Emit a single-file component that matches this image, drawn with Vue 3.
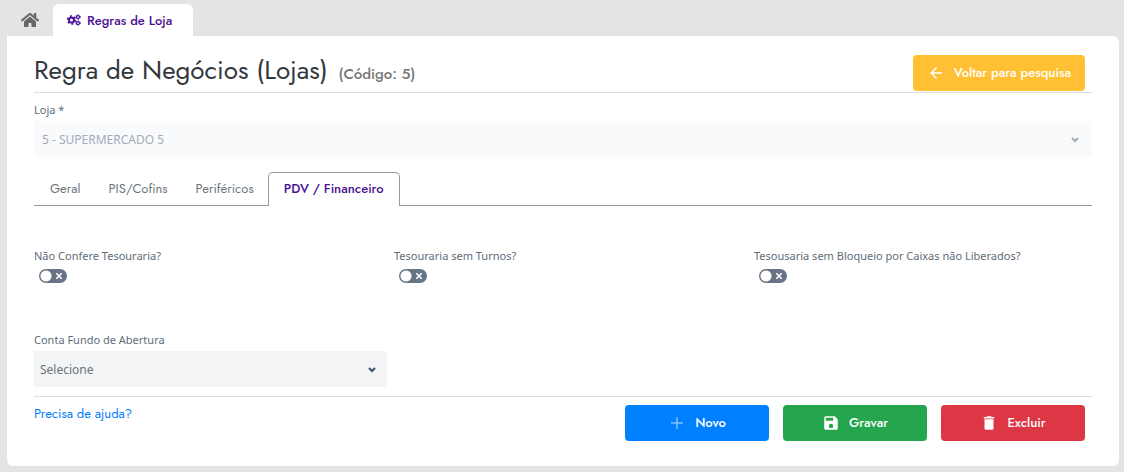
<script setup>
import {ref} from 'vue';

const tabs = ['Geral', 'PIS/Cofins', 'Periféricos', 'PDV / Financeiro'];
const activeTab = ref('PDV / Financeiro');

const loja = ref('5');
const conta = ref('');

const switches = ref([
    {id: 'nao-confere', label: 'Não Confere Tesouraria?', value: false},
    {id: 'sem-turnos', label: 'Tesouraria sem Turnos?', value: false},
    {id: 'sem-bloqueio', label: 'Tesousaria sem Bloqueio por Caixas não Liberados?', value: false},
]);
</script>

<template>
    <div class="page">
        <nav class="page-tabs">
            <a href="#" class="home-link" aria-label="Home">
                <svg width="18" height="16" viewBox="0 0 576 512" fill="currentColor">
                    <path d="M280.37 148.26L96 300.11V464a16 16 0 0 0 16 16l112.06-.29a16 16 0 0 0 15.92-16V368a16 16 0 0 1 16-16h64a16 16 0 0 1 16 16v95.64a16 16 0 0 0 16 16.05L464 480a16 16 0 0 0 16-16V300L295.67 148.26a12.19 12.19 0 0 0-15.3 0zM571.6 251.47L488 182.56V44.05a12 12 0 0 0-12-12h-56a12 12 0 0 0-12 12v72.61L318.47 43a48 48 0 0 0-61 0L4.34 251.47a12 12 0 0 0-1.6 16.9l25.5 31A12 12 0 0 0 45.15 301l235.22-193.74a12.19 12.19 0 0 1 15.3 0L530.9 301a12 12 0 0 0 16.9-1.6l25.5-31a12 12 0 0 0-1.7-16.93z"/>
                </svg>
            </a>
            <a href="#" class="page-tab">
                <svg width="14" height="12" viewBox="0 0 28 24" fill="none" stroke="currentColor">
                    <circle cx="9" cy="12" r="5" stroke-width="4"/>
                    <circle cx="9" cy="12" r="8" stroke-width="3" stroke-dasharray="4.2 4.178"/>
                    <circle cx="22" cy="6" r="3" stroke-width="2.5"/>
                    <circle cx="22" cy="6" r="4.6" stroke-width="2" stroke-dasharray="2.4 2.417"/>
                    <circle cx="22" cy="18" r="3" stroke-width="2.5"/>
                    <circle cx="22" cy="18" r="4.6" stroke-width="2" stroke-dasharray="2.4 2.417"/>
                </svg>
                Regras de Loja
            </a>
        </nav>

        <main class="panel">
            <header class="panel-header">
                <h1>Regra de Negócios (Lojas) <small>(Código: 5)</small></h1>
                <button type="button" class="btn btn-warning">
                    <svg width="18" height="18" viewBox="0 0 24 24" fill="currentColor">
                        <path d="M20 11v2H8l5.5 5.5-1.42 1.42L4.16 12l7.92-7.92L13.5 5.5 8 11h12z"/>
                    </svg>
                    Voltar para pesquisa
                </button>
            </header>

            <div class="field">
                <label for="loja">Loja *</label>
                <div class="select-box disabled">
                    <select id="loja" v-model="loja" disabled>
                        <option value="5">5 - SUPERMERCADO 5</option>
                    </select>
                    <svg class="chevron" width="8" height="6" viewBox="0 0 8 6" fill="none" stroke="currentColor" stroke-width="2">
                        <path d="M1 1l3 3 3-3"/>
                    </svg>
                </div>
            </div>

            <div class="tabs" role="tablist">
                <button
                    v-for="tab in tabs"
                    :key="tab"
                    type="button"
                    role="tab"
                    class="tab"
                    :class="{active: tab === activeTab}"
                    :aria-selected="tab === activeTab"
                    @click="activeTab = tab"
                >{{ tab }}</button>
            </div>

            <div class="form-grid">
                <div v-for="item in switches" :key="item.id" class="field">
                    <label :for="item.id">{{ item.label }}</label>
                    <div class="switch">
                        <input :id="item.id" v-model="item.value" type="checkbox">
                        <svg v-if="!item.value" class="switch-off" width="6" height="6" viewBox="0 0 6 6" stroke="currentColor" stroke-width="1.5">
                            <path d="M0 0l6 6M6 0l-6 6"/>
                        </svg>
                    </div>
                </div>
                <div class="field">
                    <label for="conta">Conta Fundo de Abertura</label>
                    <div class="select-box">
                        <select id="conta" v-model="conta">
                            <option value="">Selecione</option>
                        </select>
                        <svg class="chevron" width="8" height="6" viewBox="0 0 8 6" fill="none" stroke="currentColor" stroke-width="2">
                            <path d="M1 1l3 3 3-3"/>
                        </svg>
                    </div>
                </div>
            </div>

            <footer class="panel-footer">
                <a href="#" class="help">Precisa de ajuda?</a>
                <div class="actions">
                    <button type="button" class="btn btn-primary">
                        <svg class="faded" width="18" height="18" viewBox="0 0 24 24" fill="currentColor">
                            <path d="M20 13h-7v7h-2v-7H4v-2h7V4h2v7h7v2z"/>
                        </svg>
                        Novo
                    </button>
                    <button type="button" class="btn btn-success">
                        <svg width="18" height="18" viewBox="0 0 24 24" fill="currentColor">
                            <path d="M15 9H5V5h10m-3 14a3 3 0 0 1-3-3 3 3 0 0 1 3-3 3 3 0 0 1 3 3 3 3 0 0 1-3 3m5-16H5a2 2 0 0 0-2 2v14a2 2 0 0 0 2 2h14a2 2 0 0 0 2-2V7l-4-4z"/>
                        </svg>
                        Gravar
                    </button>
                    <button type="button" class="btn btn-danger">
                        <svg width="18" height="18" viewBox="0 0 24 24" fill="currentColor">
                            <path d="M19 4h-3.500l-1-1h-5l-1 1H5v2h14M6 19a2 2 0 0 0 2 2h8a2 2 0 0 0 2-2V7H6v12z"/>
                        </svg>
                        Excluir
                    </button>
                </div>
            </footer>
        </main>
    </div>
</template>

<style>
body {
    margin: 0;
    background-color: #e4e4e4;
}
</style>

<style scoped>
.page {
    box-sizing: border-box;
    min-height: 100vh;
    padding: 4px 5px 6px 7px;
    font-family: Jost, Lato, sans-serif;
    font-size: 13px;
    color: #6c757d;
}
.page-tabs {
    display: flex;
    height: 32px;
}
.home-link {
    display: flex;
    align-items: center;
    padding: 0 14px;
    color: #666;
}
.page-tab {
    display: flex;
    align-items: center;
    gap: 6px;
    padding: 0 21px 0 14px;
    border-radius: 6px 6px 0 0;
    background-color: #fff;
    color: #4b1094;
    font-weight: 500;
    text-decoration: none;
}
.panel {
    padding: 19px 27px 25px;
    border-radius: 0 6px 6px 6px;
    background-color: #fff;
}
.panel-header {
    display: flex;
    justify-content: space-between;
    align-items: flex-start;
    height: 37px;
    padding-right: 7px;
    border-bottom: 1px solid #dcdcdc;
}
h1 {
    margin: 0;
    font-size: 26px;
    font-weight: 400;
    line-height: 30px;
    color: #32383e;
}
h1 small {
    margin-left: 3px;
    font-size: 15px;
    font-weight: 500;
    color: #777;
}
.btn {
    display: flex;
    align-items: center;
    justify-content: center;
    gap: 9px;
    height: 36px;
    min-width: 144px;
    padding: 0 14px 2px;
    border: 0;
    border-radius: 4px;
    color: #fff;
    font: 500 13px Jost, Lato, sans-serif;
    cursor: pointer;
}
.btn svg {
    margin-top: 2px;
}
.btn-warning {
    background-color: #ffc033;
}
.btn-primary {
    background-color: #007fff;
}
.btn-success {
    background-color: #25a54d;
}
.btn-danger {
    background-color: #dd3644;
}
.faded {
    opacity: 0.5;
}
.field {
    display: flex;
    flex-direction: column;
}
.panel-header + .field {
    margin-top: 9px;
}
label {
    font-family: "Noto Sans", sans-serif;
    font-size: 11px;
    line-height: 16px;
    color: #606c78;
}
.select-box {
    position: relative;
    margin-top: 3px;
    color: #3d4f6b;
}
.select-box select {
    width: 100%;
    height: 36px;
    padding: 0 6px;
    border: 0;
    border-radius: 3px;
    appearance: none;
    background-color: #f3f4f6;
    color: #6c757d;
    font: 12px "Noto Sans", sans-serif;
    opacity: 1;
}
.select-box.disabled {
    color: #a2abb8;
}
.select-box.disabled select {
    padding: 0 8px;
    background-color: #f9fafc;
    color: #a2abb8;
}
.chevron {
    position: absolute;
    top: 16px;
    right: 11px;
    pointer-events: none;
}
.select-box.disabled .chevron {
    right: 13px;
}
.tabs {
    display: flex;
    height: 34px;
    margin-top: 15px;
    padding-left: 2px;
    box-shadow: inset 0 -1px #999;
}
.tab {
    padding: 0 14px 2px;
    border: 0;
    border-radius: 5px 5px 0 0;
    background: none;
    color: #6c757d;
    font: 13px Jost, Lato, sans-serif;
    cursor: pointer;
}
.tab.active {
    padding: 0 15px 2px;
    border: 1px solid #999;
    border-bottom: 0;
    background-color: #fff;
    color: #4b1094;
    font-weight: 500;
}
.form-grid {
    display: grid;
    grid-template-columns: repeat(3, 1fr);
    gap: 49px 7px;
    margin: 42px -15px 0 0;
}
.switch {
    position: relative;
    display: flex;
    margin: 5px 0 0 5px;
}
.switch input {
    width: 28px;
    height: 14px;
    margin: 0;
    border-radius: 7px;
    appearance: none;
    background: radial-gradient(circle at 7px 7px, #fff 5px, transparent 6px) #677386;
    cursor: pointer;
}
.switch input:checked {
    background: radial-gradient(circle at 21px 7px, #fff 5px, transparent 6px) #25a54d;
}
.switch-off {
    position: absolute;
    top: 4px;
    left: 17px;
    color: #fff;
    pointer-events: none;
}
.panel-footer {
    display: flex;
    justify-content: space-between;
    align-items: flex-start;
    margin-top: 9px;
    padding: 8px 7px 0 0;
    border-top: 1px solid #dcdcdc;
}
.help {
    color: #007bff;
    line-height: 18px;
    text-decoration: none;
}
.actions {
    display: flex;
    gap: 14px;
}
</style>
